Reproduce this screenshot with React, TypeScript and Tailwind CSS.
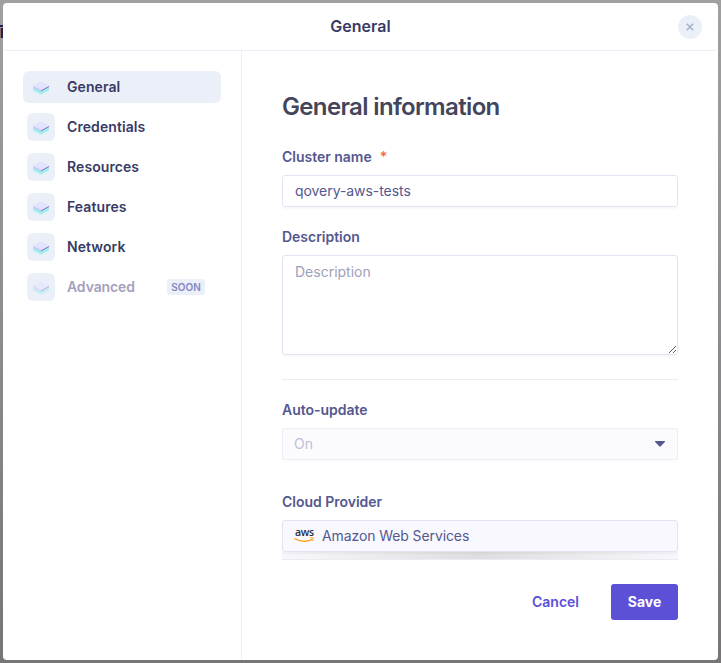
import React from "react";

const Layers = ({ faded = false }: { faded?: boolean }) => (
  <svg width="18" height="16" viewBox="0 0 18 16" className={faded ? "opacity-50" : ""}>
    <path d="M1 8.5 9 4.5 17 8.5V10.5L9 14.8 1 10.5Z" fill="#a6f1ee" />
    <path d="M1 8 9 12.2 17 8V9.1L9 13.4 1 9.1Z" fill="#a6e6ee" />
    <path d="M1 5.8 9 10.1V11.6L1 7.3Z" fill="#c0bcf5" />
    <path d="M17 5.8 9 10.1V11.6L17 7.3Z" fill="#8984cf" />
    <path d="M9 1.2 17 5.8 9 10.3 1 5.8Z" fill="#e4e2fe" />
  </svg>
);

const items = ["General", "Credentials", "Resources", "Features", "Network", "Advanced"];

const Label = ({ children }: { children: React.ReactNode }) => (
  <div className="h-5 text-[14px] leading-5 font-semibold tracking-[-0.02px] text-[#54588f]">{children}</div>
);

export default function App() {
  return (
    <div className="h-[663px] w-[721px] overflow-hidden bg-linear-to-b from-[#a0a0a0] via-[#8c8c8e] to-[#777576] p-[3px] font-['Inter','Roboto',sans-serif]">
      <span className="absolute top-[25px] left-0 flex h-[13px] w-[3px] flex-col">
        <span className="h-[2px] bg-[#202050]" />
        <span className="mt-px flex-1 border-l border-[#8c6a58] bg-[#242153]" />
      </span>
      <div className="relative flex h-[657px] w-[715px] flex-col overflow-hidden rounded-[4px] bg-white">
        <header className="relative flex h-12 shrink-0 items-center justify-center rounded-b-[4px] border-b border-[#ebedf8]">
          <h1 className="pb-px text-[16px] leading-6 font-semibold text-[#383a65]">General</h1>
          <button className="absolute top-3 right-4 flex size-6 items-center justify-center rounded-full bg-[#ebeff8]">
            <svg width="8" height="8" viewBox="0 0 8 8" stroke="#a0adc8" strokeWidth="1.4">
              <path d="M.8.8 7.2 7.2M7.2.8.8 7.2" />
            </svg>
          </button>
        </header>
        <div className="flex min-h-0 flex-1">
          <nav className="flex w-[239px] shrink-0 flex-col gap-2 border-r border-[#ebedf8] px-5 pt-5">
            {items.map((item, i) => (
              <div key={item} className={`flex h-8 w-[198px] items-center rounded-md pl-1 ${i === 0 ? "bg-[#ebeff8]" : ""}`}>
                <span className="flex size-7 items-center justify-center rounded-md bg-[#ebeff8] pt-0.5">
                  <Layers faded={i === 5} />
                </span>
                <span className={`ml-3 text-[14px] leading-5 font-semibold ${i === 5 ? "tracking-[-0.1px] text-[#a3a1bd]" : "tracking-[0.08px] text-[#383a65]"}`}>{item}</span>
                {i === 5 && (
                  <span className="mr-4 ml-auto flex h-4 w-[38px] items-center justify-center rounded-[3px] bg-[#ebeff8] text-[10px] font-semibold text-[#8386c4]">SOON</span>
                )}
              </div>
            ))}
          </nav>
          <main className="w-[436px] pt-10 pl-10">
            <h2 className="h-8 text-[24px] leading-8 font-semibold tracking-[-0.65px] text-[#44455b]">General information</h2>
            <div className="mt-6">
              <Label>
                Cluster name<span className="ml-2 text-[#ff6240]">*</span>
              </Label>
            </div>
            <div className="mt-2 flex h-8 items-center rounded-[3px] border border-[#e1e5f1] px-3 pb-px text-[14px] leading-5 tracking-[-0.06px] text-[#54588f] shadow-[0_2px_2px_#00000008]">qovery-aws-tests</div>
            <div className="mt-5">
              <Label>Description</Label>
            </div>
            <textarea
              placeholder="Description"
              className="mt-2 block h-[100px] w-full resize rounded-[3px] border border-[#e1e5f1] px-3 py-1.5 text-[14px] leading-5 shadow-[0_2px_2px_#00000008] outline-none placeholder:text-[#9e9fb9]"
            />
            <hr className="mt-6 border-[#ebedf3]" />
            <div className="mt-5">
              <Label>Auto-update</Label>
            </div>
            <div className="mt-2 flex h-8 items-center justify-between rounded-[3px] border border-[#ebedf8] bg-[#fbfbfe] px-[11px] pb-px text-[14px] leading-5 text-[#c0c0d3] shadow-[0_2px_2px_#00000005]">
              On
              <svg width="12" height="7" viewBox="0 0 12 7" fill="#54588f" className="mt-0.5"><path d="M1.6 0h8.8q1.3 0 .4 1L6.8 5.3q-.8.8-1.6 0L1.2 1Q.3 0 1.6 0Z" /></svg>
            </div>
            <div className="mt-8">
              <Label>Cloud Provider</Label>
            </div>
            <div className="relative z-10 mt-2 flex h-8 items-center rounded-[3px] border border-[#e1e5f1] bg-[#f8f8fe] px-[11px] pb-px text-[14px] leading-5 tracking-[-0.1px] text-[#54588f] shadow-[0_2px_2px_#0000000a]">
              <span className="mr-[7px] flex w-[21px] flex-col items-center font-['Open_Sans',sans-serif] text-[10.5px] leading-[9px] font-semibold tracking-[-0.3px] text-[#252f3e]">
                <span>aws</span>
                <svg width="21" height="6" viewBox="0 0 21 6" fill="none">
                  <path d="M.5 1.4Q9 6.6 18.2 2.5" stroke="#f90" strokeWidth="1.2" />
                  <path d="M16 1Q19.5 .3 19.5 1.1T18.3 4" stroke="#f90" strokeWidth=".9" />
                </svg>
              </span>
              Amazon Web Services
            </div>
            <div className="h-2 border-b border-[#ebebf5] bg-linear-to-r from-[#f8f8fc] via-[#dedee0] to-[#f8f8fc]" />
            <footer className="mt-6 flex h-9 items-center justify-end text-[14px] leading-5">
              <button className="mr-8 pb-px font-semibold text-[#5b50d6]">Cancel</button>
              <button className="h-9 w-[67px] rounded-[3px] bg-[#5b50d6] pb-px font-bold text-white">Save</button>
            </footer>
          </main>
        </div>
      </div>
    </div>
  );
}
